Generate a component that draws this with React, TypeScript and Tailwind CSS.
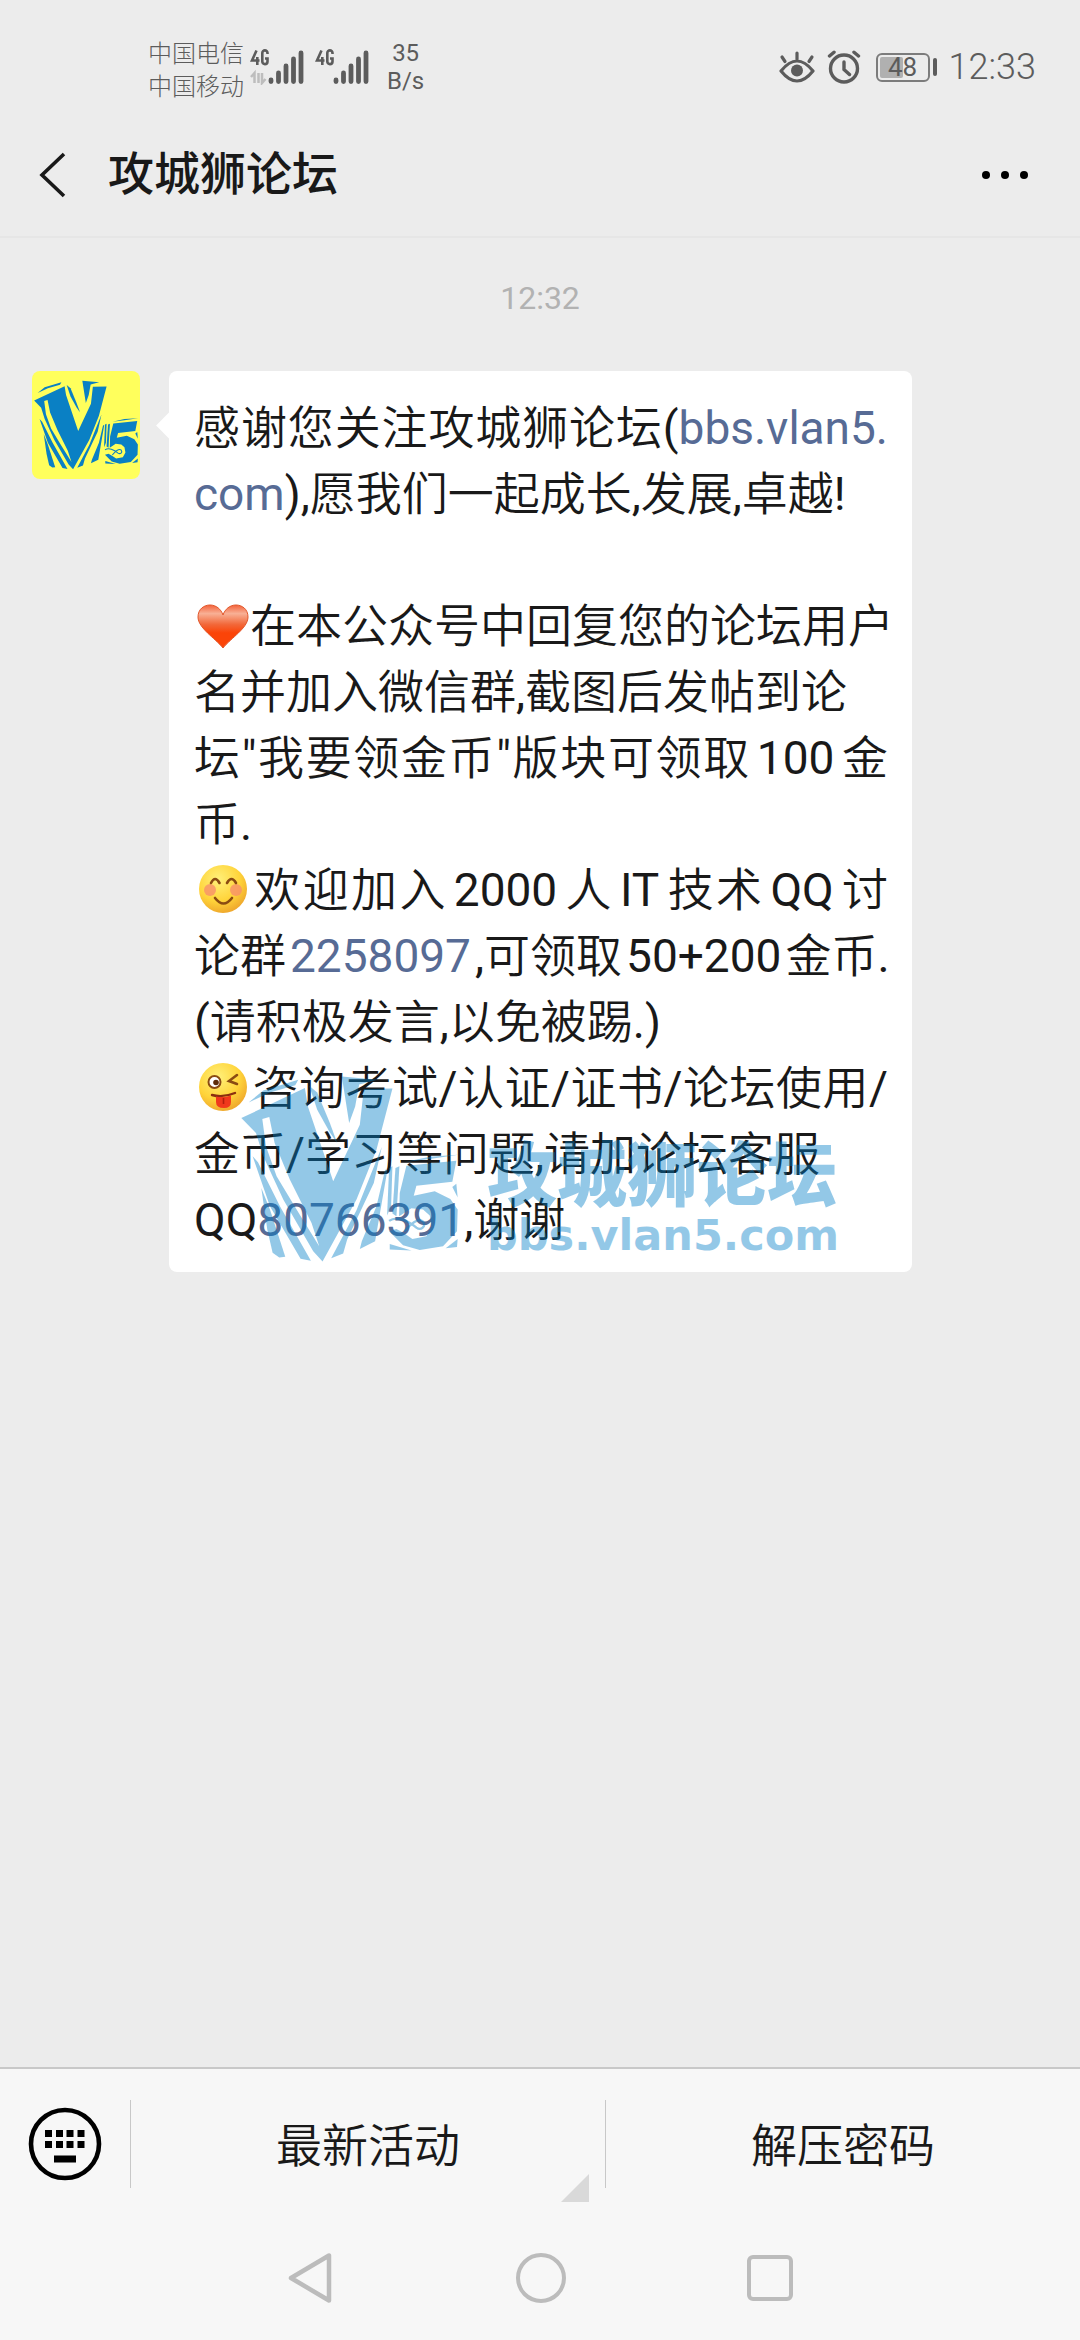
import type { ReactNode } from "react";

function V5Logo({ className }: { className?: string }) {
  return (
    <svg viewBox="30 46 658 564" className={className} fill="currentColor" aria-hidden="true">
      <path d="M56 128L100 92L205 60L196 76L120 98Z" />
      <path
        fillRule="evenodd"
        d="M34 175L225 85L234 140L310 365L390 195L402 88L488 86L440 270L380 420L278 606L250 575L160 420L100 290L78 220ZM97 178L118 172L134 250L180 360L245 490L268 560L200 450L140 350L108 260Z"
      />
      <path d="M68 290L84 308L150 440L243 604L212 598L120 440Z" />
      <path d="M94 385L120 450L166 592L148 594L128 580L112 510Z" />
      <path d="M336 50L442 60L388 74L376 140L358 190Z" />
      <path d="M238 78L262 98L300 190L322 250L300 218L262 150Z" />
      <path d="M456 262L432 370L352 540L340 582L304 596L380 452Z" />
      <path d="M466 330L473 330L436 545L390 568L396 545L440 440Z" />
      <path d="M478 325L488 320L484 440L472 468Z" />
      <path d="M497 325L509 320L500 470L488 462Z" />
      <path d="M525 307L600 291L686 285L600 298Z" />
      <path d="M530 318L680 303L668 366L560 378L552 408L615 395L662 418L684 450L682 515L640 560L570 571L520 557L478 515L500 508L522 520L548 538L590 530L606 500L600 468L580 450L545 446L508 470L510 400Z" />
      <path d="M480 553L545 573L480 570Z" />
      <path d="M648 566L684 538L682 562Z" />
      <path d="M668 382L680 372L684 414Z" />
      <path d="M478 484C500 468 535 482 560 504C574 514 590 500 580 486C566 472 540 496 524 516" fill="none" stroke="currentColor" strokeWidth="7" />
    </svg>
  );
}

function Signal({ data }: { data?: boolean }) {
  return (
    <svg viewBox="0 0 54 36" className="h-9 w-[54px]" aria-hidden="true">
      <g fill="none" stroke="#5c5c5c" strokeWidth="2.6">
        <path d="M6.500 1.500L2 11.500H9.500M7.300 8V16" />
        <path d="M17.500 5V4A2.600 2.600 0 0 0 12.300 4V12.500A2.600 2.600 0 0 0 17.500 12.500V9.500H15" />
      </g>
      {data && (
        <path d="M4.500 34V24L1 28M8.500 24V34M12 24V34L15.500 30M4.500 24V34" fill="none" stroke="#bdbdbd" strokeWidth="2.500" />
      )}
      <g stroke="#5c5c5c" strokeWidth="4.800" strokeLinecap="round">
        <path d="M21 31V32.500M28.500 24V32.500M36 17V32.500M43.500 10V32.500M51 4V32.500" />
      </g>
    </svg>
  );
}

function StatusBar() {
  return (
    <div className="flex h-[114px] items-center justify-between pt-5 pr-[44px] pl-[148px] text-[#5c5c5c]">
      <div className="flex items-center">
        <div className="pt-[2px] font-['Noto_Sans_CJK_SC',sans-serif] text-2xl leading-[33px] font-light">
          <div>中国电信</div>
          <div>中国移动</div>
        </div>
        <div className="ml-1.5 flex gap-[11px]">
          <Signal data />
          <Signal />
        </div>
        <div className="ml-[18px] text-center text-2xl leading-7">
          <div>35</div>
          <div>B/s</div>
        </div>
      </div>
      <div className="flex items-center">
        <svg viewBox="0 0 36 34" className="h-[34px] w-9" fill="none" stroke="#5c5c5c" strokeWidth="3.200" strokeLinecap="round" aria-hidden="true">
          <path d="M2 21Q18 1 34 21Q18 41 2 21Z" strokeLinejoin="round" />
          <circle cx="18" cy="20.500" r="6" fill="#5c5c5c" stroke="none" />
          <path d="M18 3V9M3 7L6 11.500M33 7L30 11.500" />
        </svg>
        <svg viewBox="0 0 34 34" className="ml-3 h-[34px] w-[34px]" fill="none" stroke="#5c5c5c" strokeWidth="3.400" strokeLinecap="round" aria-hidden="true">
          <circle cx="17" cy="18.500" r="13.500" />
          <path d="M17 12V19.500L22.500 24.500M2.500 6L7 2.200M31.500 6L27 2.200" />
        </svg>
        <div className="ml-[15px] flex items-center gap-[3px]">
          <div className="relative flex h-[29px] w-[54px] items-center justify-center rounded-md border-2 border-[#7c7c7c]">
            <div className="absolute top-[2px] bottom-[2px] left-[2px] w-[23px] rounded-xs bg-[#b0b0b0]" />
            <span className="relative text-[26px] leading-none">48</span>
          </div>
          <div className="h-[18px] w-1 rounded-sm bg-[#5c5c5c]" />
        </div>
        <span className="ml-3 text-4xl font-[350]">12:33</span>
      </div>
    </div>
  );
}

function Heart() {
  return (
    <svg viewBox="2 3 56 60" className="inline-block h-[60px] w-14 align-middle" role="img" aria-label="heart">
      <defs>
        <linearGradient id="heart" x1="0" y1="0" x2="0" y2="1">
          <stop offset="0" stopColor="#f4623a" />
          <stop offset="0.200" stopColor="#f8b095" />
          <stop offset="0.450" stopColor="#f2683a" />
          <stop offset="0.650" stopColor="#fb4408" />
        </linearGradient>
      </defs>
      <path d="M31 51C23 41 6 31 6 20C6 12 12 8 18 8C24 8 29 12 31 18C33 12 38 8 44 8C50 8 56 12 56 20C56 31 39 41 31 51Z" fill="url(#heart)" stroke="#e2562a" strokeWidth="1" />
    </svg>
  );
}

function Face({ tongue }: { tongue?: boolean }) {
  return (
    <svg viewBox="0 2 58 60" className="inline-block h-[60px] w-[58px] align-middle" role="img" aria-label={tongue ? "winking face with tongue" : "smiling face"}>
      <defs>
        <radialGradient id="face" cx="0.400" cy="0.300" r="0.750">
          <stop offset="0" stopColor="#fff07a" />
          <stop offset="0.600" stopColor="#ffd43a" />
          <stop offset="1" stopColor="#eda22a" />
        </radialGradient>
      </defs>
      <circle cx="29" cy="27" r="24" fill="url(#face)" />
      {tongue ? (
        <g transform="translate(0 -3)">
          <circle cx="20.500" cy="25" r="6" fill="#fff" stroke="#8a4b12" strokeWidth="2" />
          <circle cx="22" cy="25.500" r="2.800" fill="#5f2d0a" />
          <path d="M43 18L35 24L43 27" fill="none" stroke="#8a4b12" strokeWidth="2.600" strokeLinecap="round" />
          <path d="M18 38Q29 41 41 36" fill="none" stroke="#8a2f10" strokeWidth="2.400" strokeLinecap="round" />
          <path d="M22 39.500Q29 41 37 38.500V45Q37 51 30 51Q22 51 22 45Z" fill="#f0391c" />
          <path d="M29.500 41V47" stroke="#b31f0c" strokeWidth="1.600" />
        </g>
      ) : (
        <g transform="translate(0 -3)" fill="none" strokeLinecap="round">
          <circle cx="16" cy="31" r="6" fill="#f7906a" opacity="0.800" />
          <circle cx="42" cy="31" r="6" fill="#f7906a" opacity="0.800" />
          <path d="M17 24Q21 16 25.500 24M33 24Q37.500 16 42 24M21 39Q29.500 50 38 39" stroke="#8a4b12" strokeWidth="2.600" />
        </g>
      )}
    </svg>
  );
}

function Line({ full, children }: { full?: boolean; children?: ReactNode }) {
  return <p className={full ? "h-[66px] text-justify [text-align-last:justify]" : "h-[66px] whitespace-nowrap"}>{children}</p>;
}

// latin words inside chinese text, with a narrow gap on both sides
function Latin({ wide, children }: { wide?: boolean; children: ReactNode }) {
  return <span className={wide ? "mx-1.5" : "mx-1"}>{children}</span>;
}

function MessageLink({ href, children }: { href: string; children: ReactNode }) {
  return (
    <a href={href} className="text-[#576b95]">
      {children}
    </a>
  );
}

function Watermark() {
  return (
    <div className="pointer-events-none absolute bottom-[7px] left-[71px] flex items-end text-[#007ec8] opacity-42">
      <V5Logo className="h-[192px] w-[219px]" />
      <div className="ml-7 pb-[7px] whitespace-nowrap">
        <div className="font-['Noto_Sans_CJK_SC',sans-serif] text-[70px] leading-[82px] font-black">攻城狮论坛</div>
        <div className="font-['DejaVu_Sans'] text-[43px] leading-[46px] font-bold">bbs.vlan5.com</div>
      </div>
    </div>
  );
}

export default function App() {
  return (
    <div className="flex min-h-screen flex-col bg-[#ececec] font-[Roboto,'Noto_Sans_CJK_SC_DemiLight','Noto_Sans_CJK_SC',sans-serif] text-[#191919]">
      <StatusBar />
      <header className="flex h-[124px] items-center border-b-2 border-[#e6e6e6] pr-[52px] pl-[39px]">
        <button aria-label="返回">
          <svg viewBox="0 0 28 46" className="h-[46px] w-7" fill="none" stroke="currentColor" strokeWidth="3.600">
            <path d="M25 2L3 23L25 44" />
          </svg>
        </button>
        <h1 className="ml-[41px] pb-[2px] font-[Roboto,'Noto_Sans_CJK_SC',sans-serif] text-[46px] font-medium">攻城狮论坛</h1>
        <button aria-label="更多" className="ml-auto flex gap-[11px]">
          <span className="h-2 w-2 rounded-full bg-black" />
          <span className="h-2 w-2 rounded-full bg-black" />
          <span className="h-2 w-2 rounded-full bg-black" />
        </button>
      </header>

      <main className="flex-1">
        <div className="pt-10 text-center text-[32px] leading-[40px] text-[#b2b2b2]">12:32</div>
        <div className="mt-[53px] mr-[168px] ml-8 flex items-start">
          <div className="flex h-[108px] w-[108px] shrink-0 items-center justify-center rounded-lg bg-[#ffff5c] text-[#0a80c4]">
            <V5Logo className="h-[90px] w-[106px]" />
          </div>
          <div className="relative ml-[29px] min-w-0 flex-1 rounded-lg bg-white pt-[24px] pr-6 pb-[19px] pl-[25px] text-[46px] leading-[66px]">
            <div className="absolute top-[45px] -left-[9px] h-[19px] w-[19px] rotate-45 bg-white" />
            <Line full>
              感谢您关注攻城狮论坛(<MessageLink href="#bbs">bbs.vlan5.</MessageLink>
            </Line>
            <Line>
              <MessageLink href="#bbs">com</MessageLink>),愿我们一起成长,发展,卓越!
            </Line>
            <Line />
            <Line>
              <Heart />在本公众号中回复您的论坛用户
            </Line>
            <Line>名并加入微信群,截图后发帖到论</Line>
            <Line full>
              坛"我要领金币"版块可领取<Latin wide>100</Latin>金
            </Line>
            <Line>币.</Line>
            <Line full>
              <Face />欢迎加入<Latin wide>2000</Latin>人<Latin wide>IT</Latin>技术<Latin wide>QQ</Latin>讨
            </Line>
            <Line>
              论群<Latin><MessageLink href="#2258097">2258097</MessageLink></Latin>,可领取<Latin>50+200</Latin>金币.
            </Line>
            <Line>(请积极发言,以免被踢.)</Line>
            <Line full>
              <Face tongue />咨询考试/认证/证书/论坛使用/
            </Line>
            <Line>金币/学习等问题,请加论坛客服</Line>
            <Line>
              QQ<MessageLink href="#80766391">80766391</MessageLink>,谢谢
            </Line>
            <Watermark />
          </div>
        </div>
      </main>

      <footer className="border-t-2 border-[#c8c8c8] bg-[#f7f7f7]">
        <div className="flex h-[150px] items-center text-[46px]">
          <button aria-label="键盘" className="flex w-[130px] justify-center">
            <svg viewBox="0 0 74 74" className="h-[74px] w-[74px]">
              <circle cx="37" cy="37" r="34" fill="none" stroke="#000" strokeWidth="4.600" />
              <path d="M17 23h7v7h-7zM28 23h7v7h-7zM38.500 23h7v7h-7zM49.500 23h7v7h-7zM17 34h7v7h-7zM28 34h7v7h-7zM38.500 34h7v7h-7zM49.500 34h7v7h-7zM26 48.500h22v7h-22z" />
            </svg>
          </button>
          <button className="relative flex h-[88px] flex-1 items-center justify-center border-l border-[#c8c8c8] pt-1">
            最新活动
            <svg viewBox="0 0 28 28" className="absolute right-4 -bottom-[14px] h-7 w-7">
              <path d="M28 0V28H0Z" fill="#d9d9d9" />
            </svg>
          </button>
          <button className="flex h-[88px] flex-1 items-center justify-center border-l border-[#c8c8c8] pt-1">解压密码</button>
        </div>
        <nav className="flex h-[121px] items-center justify-center gap-[181px] pr-[3px] pb-[3px]">
          <button aria-label="Back">
            <svg viewBox="0 0 50 54" className="h-[54px] w-[50px]" fill="none" stroke="#bcbcbc" strokeWidth="4.500" strokeLinejoin="round">
              <path d="M44 4.500V49.500L6 27Z" />
            </svg>
          </button>
          <button aria-label="Home" className="h-[50px] w-[50px] rounded-full border-4 border-[#bcbcbc]" />
          <button aria-label="Recents" className="h-[46px] w-[46px] rounded-md border-4 border-[#bcbcbc]" />
        </nav>
      </footer>
    </div>
  );
}
